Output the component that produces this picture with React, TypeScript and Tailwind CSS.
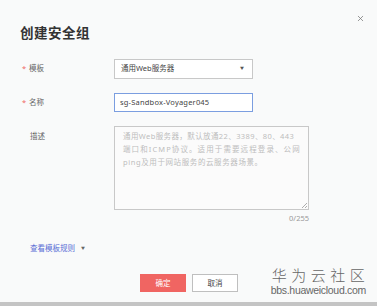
import { X } from "lucide-react";

const font = "font-['Noto_Sans','Noto_Sans_CJK_SC',sans-serif]";

export default function App() {
  return (
    <div className={`relative w-[377px] h-[306px] overflow-hidden bg-[#f9fafa] text-[#555] ${font}`}>
      <button className="absolute top-[14px] right-[12px] text-[#777]">
        <X className="h-[9px] w-[9px]" strokeWidth={2} />
      </button>

      <div className="pt-[23px] pl-[20px]">
        <h1 className="text-[13.5px] leading-[20px] font-bold text-[#333] tracking-[0.5px]">创建安全组</h1>
      </div>

      <div className="mt-[16px] flex flex-col gap-[14px]">
        {/* template */}
        <div className="flex items-center h-[20px]">
          <div className="w-[114px] pl-[22px] flex items-center text-[7.5px] text-[#666]">
            <span className="w-[7px] text-[#f06562]">*</span>
            <span>模板</span>
          </div>
          <div className="w-[139px] h-[20px] flex items-center justify-between border border-[#c8c8c8] bg-white pl-[6px] pr-[8px] text-[7.5px] text-[#444]">
            <span>通用Web服务器</span>
            <span className="text-[4px] text-[#555]">▼</span>
          </div>
        </div>

        {/* name */}
        <div className="flex items-center h-[19px]">
          <div className="w-[114px] pl-[22px] flex items-center text-[7.5px] text-[#666]">
            <span className="w-[7px] text-[#f06562]">*</span>
            <span>名称</span>
          </div>
          <div className="w-[139px] h-[19px] flex items-center border border-[#7b9ee0] bg-white pl-[5px] text-[7.5px] text-[#444] tracking-[0.2px]">
            sg-Sandbox-Voyager045
          </div>
        </div>

        {/* description */}
        <div className="flex">
          <div className="w-[114px] pl-[30px] pt-[5px] text-[7.5px] text-[#666]">描述</div>
          <div className="flex flex-col items-end">
            <div className="relative w-[195px] h-[84px] overflow-hidden whitespace-nowrap border border-[#c8c8c8] bg-[#fbfbfb] px-[8px] pt-[3px] text-[7.5px] leading-[13px] text-[#bdbdbd]">
              <div className="tracking-[0.4px]">通用Web服务器，默认放通22、3389、80、443</div>
              <div className="tracking-[1.1px]">端口和ICMP协议。适用于需要远程登录、公网</div>
              <div className="tracking-[0.6px]">ping及用于网站服务的云服务器场景。</div>
              <svg className="absolute right-[1px] bottom-[1px]" width="6" height="6" viewBox="0 0 6 6">
                <path d="M6 1 L1 6 M6 4 L4 6" stroke="#999" strokeWidth="0.8" />
              </svg>
            </div>
            <div className="mt-[3px] text-[7.5px] leading-[10px] text-[#999]">0/255</div>
          </div>
        </div>
      </div>

      <div className="mt-[20px] pl-[30px] flex items-center gap-[6px] text-[7.5px] text-[#5b6fd6]">
        <span>查看模板规则</span>
        <span className="text-[4px] text-[#666]">▼</span>
      </div>

      <div className="mt-[20px] flex gap-[6px] pl-[140px]">
        <button className="w-[46px] h-[18px] bg-[#f06562] text-white text-[7.5px]">确定</button>
        <button className="w-[46px] h-[18px] border border-[#bfbfbf] bg-white text-[#444] text-[7.5px]">取消</button>
      </div>

      {/* watermark */}
      <div className="absolute right-[11px] bottom-[9px] flex flex-col items-center text-[#666]">
        <div className="text-[15px] leading-[18px] tracking-[4.5px] -mr-[4.5px] font-light">华为云社区</div>
        <div className={`text-[10.5px] leading-[13px] tracking-[-0.3px] font-['Liberation_Sans',sans-serif]`}>bbs.huaweicloud.com</div>
      </div>

      <div className="absolute bottom-0 left-0 right-0 h-[4px] bg-[#c4c4c4]" />
    </div>
  );
}
